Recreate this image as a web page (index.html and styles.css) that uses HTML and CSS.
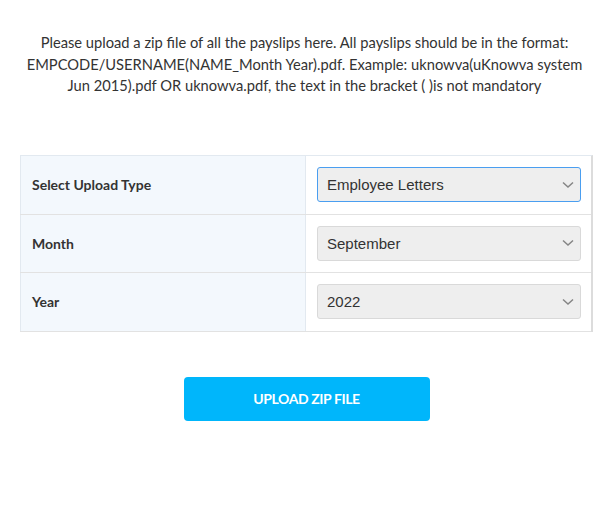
FILE: index.html
```html
<!DOCTYPE html>
<html>
<head>
<meta charset="utf-8">
<link rel="stylesheet" href="styles.css">
</head>
<body>
<div class="page">
  <p class="intro">Please upload a zip file of all the payslips here. All payslips should be in the format: EMPCODE/USERNAME(NAME_Month Year).pdf. Example: uknowva(uKnowva system Jun 2015).pdf OR uknowva.pdf, the text in the bracket ( )is not mandatory</p>
  <div class="form-table">
    <div class="row">
      <div class="label">Select Upload Type</div>
      <div class="field">
        <div class="select focus"><span>Employee Letters</span><svg class="chev" width="12" height="8" viewBox="0 0 12 8"><path d="M1 1.5 L6 6 L11 1.5" fill="none" stroke="#858585" stroke-width="1.5"/></svg></div>
      </div>
    </div>
    <div class="row mid">
      <div class="label">Month</div>
      <div class="field">
        <div class="select"><span>September</span><svg class="chev" width="12" height="8" viewBox="0 0 12 8"><path d="M1 1.5 L6 6 L11 1.5" fill="none" stroke="#858585" stroke-width="1.5"/></svg></div>
      </div>
    </div>
    <div class="row">
      <div class="label">Year</div>
      <div class="field">
        <div class="select"><span>2022</span><svg class="chev" width="12" height="8" viewBox="0 0 12 8"><path d="M1 1.5 L6 6 L11 1.5" fill="none" stroke="#858585" stroke-width="1.5"/></svg></div>
      </div>
    </div>
  </div>
  <div class="actions">
    <button class="upload-btn">UPLOAD ZIP FILE</button>
  </div>
</div>
</body>
</html>
```
FILE: styles.css
```css
html, body {
  margin: 0;
  padding: 0;
  background: #fff;
}
.page {
  width: 573px;
  padding: 32px 20px 0 20px;
  font-family: Lato, "Liberation Sans", sans-serif;
  color: #333;
}
.intro {
  margin: 0 0 58px 0;
  font-size: 14.7px;
  line-height: 21.5px;
  text-align: center;
  padding: 0 6px 0 2px;
}
.form-table {
  display: flex;
  flex-direction: column;
  border-top: 1px solid #e2e9f0;
  border-right: 2px solid #dcdcdc;
}
.row {
  display: grid;
  grid-template-columns: 286px 1fr;
  height: 58px;
  border-bottom: 1px solid #e2e2e2;
}
.row.mid {
  height: 57px;
}
.label {
  background: #f3f8fd;
  border-left: 1px solid #e2e9f0;
  border-right: 1px solid #e2e9f0;
  display: flex;
  align-items: center;
  padding-left: 11px;
  font-weight: 700;
  font-size: 14px;
}
.field {
  display: flex;
  align-items: center;
  padding: 0 10px 0 11px;
}
.select {
  flex: 1;
  box-sizing: border-box;
  height: 35px;
  background: #eeeeee;
  border: 1px solid #d9d9d9;
  border-radius: 3px;
  display: flex;
  align-items: center;
  justify-content: space-between;
  padding: 0 6px 0 9px;
  font-family: "Liberation Sans", Arial, sans-serif;
  font-size: 15px;
  color: #333;
}
.select.focus {
  border-color: #4a9ef0;
}
.chev {
  display: block;
}
.actions {
  display: flex;
  justify-content: center;
  padding-top: 45px;
}
.upload-btn {
  width: 246px;
  height: 44px;
  background: #00b6fb;
  border: none;
  border-radius: 4px;
  color: #fff;
  font-family: Lato, "Liberation Sans", sans-serif;
  font-weight: 700;
  font-size: 14px;
  letter-spacing: -0.4px;
  padding: 0;
}
```
